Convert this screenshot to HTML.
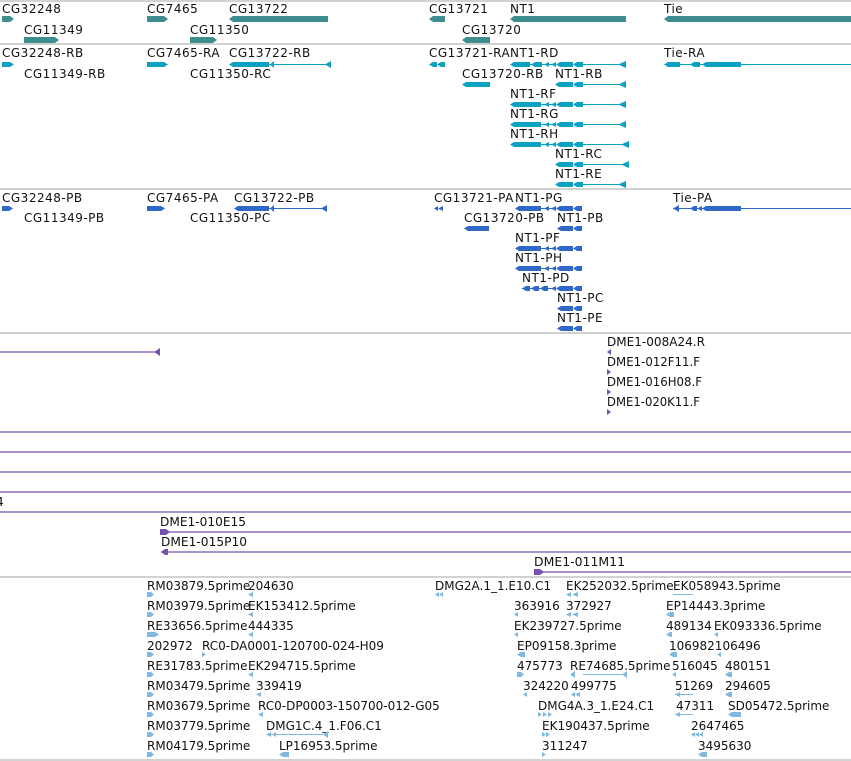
<!DOCTYPE html>
<html><head><meta charset="utf-8"><style>
html,body{margin:0;padding:0;background:#fff;width:851px;height:761px;overflow:hidden}
svg{display:block}
text{font-family:"DejaVu Sans","Liberation Sans",sans-serif;font-size:12px;fill:#111;letter-spacing:0.5px}
.nl text{letter-spacing:0}
.g{fill:#3e8e90}.t{fill:#0ba1c1}.p{fill:#3068c8}.u{fill:#7353ab}.b{fill:#80b8e0}
.tl{stroke:#0ba1c1}.pl{stroke:#3068c8}.ul{stroke:#7353ab}.bl{stroke:#80b8e0}
.sep{stroke:#c4c4c4}
</style></head><body>
<svg width="851" height="761" xmlns="http://www.w3.org/2000/svg">
<g class="sep" stroke-width="1.5">
<line x1="0" y1="1" x2="851" y2="1"/><line x1="0" y1="44" x2="851" y2="44"/><line x1="0" y1="189" x2="851" y2="189"/><line x1="0" y1="333" x2="851" y2="333"/><line x1="0" y1="577" x2="851" y2="577"/><line x1="0" y1="760" x2="851" y2="760"/>
</g>
<text x="2" y="13">CG32248</text><text x="147" y="13">CG7465</text><text x="229" y="13">CG13722</text><text x="429" y="13">CG13721</text><text x="510" y="13">NT1</text><text x="664" y="13">Tie</text>
<text x="24" y="34">CG11349</text><text x="190" y="34">CG11350</text><text x="462" y="34">CG13720</text>
<g class="g">
<polygon points="2,16 10,16 14,19 10,22 2,22"/>
<polygon points="147,16 164,16 168,19 164,22 147,22"/>
<polygon points="229,19 233,16 328,16 328,22 233,22"/>
<polygon points="429,19 433,16 445,16 445,22 433,22"/>
<polygon points="510,19 514,16 626,16 626,22 514,22"/>
<polygon points="664,19 668,16 851,16 851,22 668,22"/>
<polygon points="24,37 55,37 59,40 55,43 24,43"/>
<polygon points="190,37 213,37 217,40 213,43 190,43"/>
<polygon points="462,40 466,37 490,37 490,43 466,43"/>
</g>
<text x="2" y="57">CG32248-RB</text><text x="147" y="57">CG7465-RA</text><text x="229" y="57">CG13722-RB</text><text x="429" y="57">CG13721-RA</text><text x="510" y="57">NT1-RD</text><text x="664" y="57">Tie-RA</text>
<text x="24" y="78">CG11349-RB</text><text x="190" y="78">CG11350-RC</text><text x="462" y="78">CG13720-RB</text><text x="555" y="78">NT1-RB</text>
<text x="510" y="98">NT1-RF</text><text x="510" y="118">NT1-RG</text><text x="510" y="138">NT1-RH</text><text x="555" y="158">NT1-RC</text><text x="555" y="178">NT1-RE</text>
<g class="tl" stroke-width="1">
<line x1="269" y1="64.5" x2="331" y2="64.5"/><line x1="583" y1="64.5" x2="626" y2="64.5"/><line x1="680" y1="64.5" x2="851" y2="64.5"/>
<line x1="583" y1="84.5" x2="626" y2="84.5"/><line x1="583" y1="104.5" x2="626" y2="104.5"/><line x1="583" y1="124.5" x2="626" y2="124.5"/><line x1="583" y1="144.5" x2="629" y2="144.5"/><line x1="583" y1="164.5" x2="629" y2="164.5"/><line x1="583" y1="184.5" x2="626" y2="184.5"/>
<line x1="541" y1="104.5" x2="556" y2="104.5"/><line x1="541" y1="124.5" x2="556" y2="124.5"/><line x1="541" y1="144.5" x2="556" y2="144.5"/><line x1="530" y1="64.5" x2="556" y2="64.5"/>
</g>
<g class="t">
<polygon points="2,62 10,62 14,64.5 10,67 2,67"/>
<polygon points="147,62 164,62 168,64.5 164,67 147,67"/>
<polygon points="229,64.5 233,62 269,62 269,67 233,67"/><polygon points="270,64.5 274,61 274,68"/><polygon points="325,64.5 331,61 331,68"/>
<polygon points="429,64.5 433,62 437,62 437,67 433,67"/><polygon points="437,64.5 441,62 445,62 445,67 441,67"/>
<polygon points="510,64.5 514,62 530,62 530,67 514,67"/><polygon points="531,64.5 535,62 542,62 542,67 535,67"/><polygon points="544,64.5 549,62 549,67"/><polygon points="551,64.5 556,62 556,67"/><polygon points="556,64.5 560,62 573,62 573,67 560,67"/><polygon points="573,64.5 577,62 583,62 583,67 577,67"/><polygon points="618,64.5 626,61 626,68"/>
<polygon points="664,64.5 668,62 680,62 680,67 668,67"/><polygon points="690,64.5 694,62 700,62 700,67 694,67"/><polygon points="702,64.5 706,62 741,62 741,67 706,67"/>
<polygon points="462,84.5 466,82 490,82 490,87 466,87"/>
<polygon points="555,84.5 559,82 573,82 573,87 559,87"/><polygon points="573,84.5 577,82 583,82 583,87 577,87"/><polygon points="618,84.5 626,81 626,88"/>
<g transform="translate(0,40)"><polygon points="510,64.5 514,62 541,62 541,67 514,67"/><polygon points="544,64.5 549,62 549,67"/><polygon points="551,64.5 556,62 556,67"/><polygon points="556,64.5 560,62 573,62 573,67 560,67"/><polygon points="573,64.5 577,62 583,62 583,67 577,67"/><polygon points="618,64.5 626,61 626,68"/></g>
<g transform="translate(0,60)"><polygon points="510,64.5 514,62 541,62 541,67 514,67"/><polygon points="544,64.5 549,62 549,67"/><polygon points="551,64.5 556,62 556,67"/><polygon points="556,64.5 560,62 573,62 573,67 560,67"/><polygon points="573,64.5 577,62 583,62 583,67 577,67"/><polygon points="618,64.5 626,61 626,68"/></g>
<g transform="translate(0,80)"><polygon points="510,64.5 514,62 541,62 541,67 514,67"/><polygon points="544,64.5 549,62 549,67"/><polygon points="551,64.5 556,62 556,67"/><polygon points="556,64.5 560,62 573,62 573,67 560,67"/><polygon points="573,64.5 577,62 583,62 583,67 577,67"/><polygon points="621,64.5 629,61 629,68"/></g>
<g transform="translate(0,100)"><polygon points="555,64.5 559,62 573,62 573,67 559,67"/><polygon points="573,64.5 577,62 583,62 583,67 577,67"/><polygon points="621,64.5 629,61 629,68"/></g>
<g transform="translate(0,120)"><polygon points="555,64.5 559,62 573,62 573,67 559,67"/><polygon points="573,64.5 577,62 583,62 583,67 577,67"/><polygon points="618,64.5 626,61 626,68"/></g>
</g>
<text x="2" y="202">CG32248-PB</text><text x="147" y="202">CG7465-PA</text><text x="234" y="202">CG13722-PB</text><text x="434" y="202">CG13721-PA</text><text x="515" y="202">NT1-PG</text><text x="673" y="202">Tie-PA</text>
<text x="24" y="222">CG11349-PB</text><text x="190" y="222">CG11350-PC</text><text x="464" y="222">CG13720-PB</text><text x="557" y="222">NT1-PB</text>
<text x="515" y="242">NT1-PF</text><text x="515" y="262">NT1-PH</text><text x="522" y="282">NT1-PD</text><text x="557" y="302">NT1-PC</text><text x="557" y="322">NT1-PE</text>
<g class="pl" stroke-width="1">
<line x1="269" y1="208.5" x2="327" y2="208.5"/><line x1="673" y1="208.5" x2="851" y2="208.5"/>
<line x1="541" y1="208.5" x2="556" y2="208.5"/><line x1="541" y1="248.5" x2="556" y2="248.5"/><line x1="541" y1="268.5" x2="556" y2="268.5"/><line x1="522" y1="288.5" x2="556" y2="288.5"/>
</g>
<g class="p">
<polygon points="2,206 9,206 13,208.5 9,211 2,211"/>
<polygon points="147,206 161,206 165,208.5 161,211 147,211"/>
<polygon points="234,208.5 238,206 269,206 269,211 238,211"/><polygon points="270,208.5 274,205 274,212"/><polygon points="321,208.5 327,205 327,212"/>
<polygon points="434,208.5 438,206 438,211"/><polygon points="438,208.5 443,206 443,211"/>
<polygon points="515,208.5 519,206 541,206 541,211 519,211"/><polygon points="544,208.5 549,206 549,211"/><polygon points="551,208.5 556,206 556,211"/><polygon points="556,208.5 560,206 573,206 573,211 560,211"/><polygon points="573,208.5 577,206 582,206 582,211 577,211"/>
<polygon points="673,208.5 679,205 679,212"/><polygon points="690,208.5 694,206 697,206 697,211 694,211"/><polygon points="697,208.5 702,206 702,211"/><polygon points="702,208.5 706,206 741,206 741,211 706,211"/>
<polygon points="464,228.5 468,226 489,226 489,231 468,231"/>
<polygon points="557,228.5 561,226 573,226 573,231 561,231"/><polygon points="573,228.5 577,226 582,226 582,231 577,231"/>
<g transform="translate(0,40)"><polygon points="515,208.5 519,206 541,206 541,211 519,211"/><polygon points="544,208.5 549,206 549,211"/><polygon points="551,208.5 556,206 556,211"/><polygon points="556,208.5 560,206 573,206 573,211 560,211"/><polygon points="573,208.5 577,206 582,206 582,211 577,211"/></g>
<g transform="translate(0,60)"><polygon points="515,208.5 519,206 541,206 541,211 519,211"/><polygon points="544,208.5 549,206 549,211"/><polygon points="551,208.5 556,206 556,211"/><polygon points="556,208.5 560,206 573,206 573,211 560,211"/><polygon points="573,208.5 577,206 582,206 582,211 577,211"/></g>
<g transform="translate(0,80)"><polygon points="522,208.5 526,206 530,206 530,211 526,211"/><polygon points="531,208.5 535,206 539,206 539,211 535,211"/><polygon points="540,208.5 544,206 548,206 548,211 544,211"/><polygon points="551,208.5 556,206 556,211"/><polygon points="556,208.5 560,206 573,206 573,211 560,211"/><polygon points="573,208.5 577,206 582,206 582,211 577,211"/></g>
<polygon points="557,308.5 561,306 573,306 573,311 561,311"/><polygon points="573,308.5 577,306 582,306 582,311 577,311"/>
<polygon points="557,328.5 561,326 573,326 573,331 561,331"/><polygon points="573,328.5 577,326 582,326 582,331 577,331"/>
</g>
<g class="ul" stroke-width="1.3">
<line x1="0" y1="352" x2="158" y2="352"/>
<line x1="0" y1="432" x2="851" y2="432"/><line x1="0" y1="452" x2="851" y2="452"/><line x1="0" y1="472" x2="851" y2="472"/><line x1="0" y1="492" x2="851" y2="492"/><line x1="0" y1="512" x2="851" y2="512"/>
<line x1="160" y1="532" x2="851" y2="532"/><line x1="161" y1="552" x2="851" y2="552"/><line x1="534" y1="572" x2="851" y2="572"/>
</g>
<g class="u">
<polygon points="154,352 160,348 160,356"/>
<polygon points="607,352 611,349 611,355"/>
<polygon points="607,369 611,372 607,375"/><polygon points="607,389 611,392 607,395"/><polygon points="607,409 611,412 607,415"/>
<polygon points="160,529 166,529 170,532 166,535 160,535"/>
<polygon points="161,552 165,549 168,549 168,555 165,555"/>
<polygon points="534,569 540,569 544,572 540,575 534,575"/>
</g>
<g class="nl">
<text x="607" y="346" textLength="98" lengthAdjust="spacingAndGlyphs">DME1-008A24.R</text>
<text x="607" y="366" textLength="93" lengthAdjust="spacingAndGlyphs">DME1-012F11.F</text>
<text x="607" y="386" textLength="95" lengthAdjust="spacingAndGlyphs">DME1-016H08.F</text>
<text x="607" y="406" textLength="93" lengthAdjust="spacingAndGlyphs">DME1-020K11.F</text>
<text x="-4" y="506">4</text>
<text x="160" y="526" textLength="86" lengthAdjust="spacingAndGlyphs">DME1-010E15</text>
<text x="161" y="546" textLength="86" lengthAdjust="spacingAndGlyphs">DME1-015P10</text>
<text x="534" y="566" textLength="91" lengthAdjust="spacingAndGlyphs">DME1-011M11</text>
</g>
<g class="nl">
<text x="147" y="590">RM03879.5prime</text><text x="248" y="590">204630</text><text x="435" y="590">DMG2A.1_1.E10.C1</text><text x="566" y="590">EK252032.5prime</text><text x="673" y="590">EK058943.5prime</text>
<text x="147" y="610">RM03979.5prime</text><text x="248" y="610">EK153412.5prime</text><text x="514" y="610">363916</text><text x="566" y="610">372927</text><text x="666" y="610">EP14443.3prime</text>
<text x="147" y="630">RE33656.5prime</text><text x="248" y="630">444335</text><text x="514" y="630">EK239727.5prime</text><text x="666" y="630">489134</text><text x="714" y="630">EK093336.5prime</text>
<text x="147" y="650">202972</text><text x="202" y="650">RC0-DA0001-120700-024-H09</text><text x="517" y="650">EP09158.3prime</text><text x="669" y="650">106982106496</text>
<text x="147" y="670">RE31783.5prime</text><text x="248" y="670">EK294715.5prime</text><text x="517" y="670">475773</text><text x="570" y="670">RE74685.5prime</text><text x="672" y="670">516045</text><text x="725" y="670">480151</text>
<text x="147" y="690">RM03479.5prime</text><text x="256" y="690">339419</text><text x="523" y="690">324220</text><text x="571" y="690">499775</text><text x="675" y="690">51269</text><text x="725" y="690">294605</text>
<text x="147" y="710">RM03679.5prime</text><text x="258" y="710">RC0-DP0003-150700-012-G05</text><text x="538" y="710">DMG4A.3_1.E24.C1</text><text x="676" y="710">47311</text><text x="728" y="710">SD05472.5prime</text>
<text x="147" y="730">RM03779.5prime</text><text x="266" y="730">DMG1C.4_1.F06.C1</text><text x="542" y="730">EK190437.5prime</text><text x="691" y="730">2647465</text>
<text x="147" y="750">RM04179.5prime</text><text x="279" y="750">LP16953.5prime</text><text x="542" y="750">311247</text><text x="698" y="750">3495630</text>
</g>
<g class="bl" stroke-width="1">
<line x1="673" y1="594.5" x2="693" y2="594.5"/><line x1="583" y1="674.5" x2="627" y2="674.5"/>
<line x1="675" y1="694.5" x2="693" y2="694.5"/><line x1="675" y1="714.5" x2="693" y2="714.5"/><line x1="270" y1="734.5" x2="328" y2="734.5"/>
</g>
<g class="b">
<polygon points="147,592 151,592 154,594.5 151,597 147,597"/>
<polygon points="147,612 151,612 154,614.5 151,617 147,617"/>
<polygon points="147,632 155,632 159,634.5 155,637 147,637"/>
<polygon points="147,652 151,652 154,654.5 151,657 147,657"/>
<polygon points="147,672 151,672 154,674.5 151,677 147,677"/>
<polygon points="147,692 151,692 154,694.5 151,697 147,697"/>
<polygon points="147,712 151,712 154,714.5 151,717 147,717"/>
<polygon points="147,732 151,732 154,734.5 151,737 147,737"/>
<polygon points="147,752 151,752 154,754.5 151,757 147,757"/>
<polygon points="248,594.5 253,592 253,597"/><polygon points="248,614.5 253,612 253,617"/><polygon points="248,634.5 253,632 253,637"/>
<polygon points="202,652 206,654.5 202,657"/><polygon points="248,674.5 253,672 253,677"/><polygon points="256,694.5 261,692 261,697"/>
<polygon points="258,714.5 263,712 263,717"/><polygon points="266,734.5 271,732 271,737"/><polygon points="272,734.5 276,732 276,737"/><polygon points="323,734.5 328,731 328,738"/>
<polygon points="279,754.5 283,752 289,752 289,757 283,757"/>
<polygon points="435,594.5 439,592 439,597"/><polygon points="439,594.5 443,592 443,597"/>
<polygon points="566,594.5 571,592 571,597"/><polygon points="572,594.5 578,592 578,597"/>
<polygon points="514,614.5 518,612 518,617"/><polygon points="566,614.5 571,612 571,617"/><polygon points="572,614.5 578,612 578,617"/>
<polygon points="514,634.5 518,632 518,637"/>
<polygon points="517,654.5 521,652 525,652 525,657 521,657"/>
<polygon points="517,672 521,672 524,674.5 521,677 517,677"/><polygon points="570,674.5 575,671 575,678"/><polygon points="622,674.5 627,671 627,678"/>
<polygon points="523,694.5 527,692 527,697"/><polygon points="571,694.5 575,692 575,697"/><polygon points="575,694.5 580,692 580,697"/>
<polygon points="538,712 542,714.5 538,717"/><polygon points="543,712 547,714.5 543,717"/><polygon points="548,712 552,714.5 548,717"/>
<polygon points="542,732 546,734.5 542,737"/><polygon points="546,732 550,734.5 546,737"/>
<polygon points="542,752 546,754.5 542,757"/>
<polygon points="666,614.5 670,612 674,612 674,617 670,617"/>
<polygon points="666,634.5 670,632 672,632 672,637 670,637"/><polygon points="714,634.5 718,632 718,637"/>
<polygon points="669,654.5 673,652 677,652 677,657 673,657"/><polygon points="717,654.5 721,652 721,657"/>
<polygon points="672,674.5 676,672 676,677"/><polygon points="725,674.5 729,672 732,672 732,677 729,677"/>
<polygon points="675,694.5 680,692 680,697"/><polygon points="725,694.5 729,692 732,692 732,697 729,697"/>
<polygon points="675,714.5 680,712 680,717"/><polygon points="728,714.5 732,712 741,712 741,717 732,717"/>
<polygon points="691,734.5 695,732 695,737"/><polygon points="695,734.5 699,732 699,737"/><polygon points="699,734.5 703,732 703,737"/>
<polygon points="698,754.5 702,752 707,752 707,757 702,757"/>
</g>
</svg>
</body></html>
